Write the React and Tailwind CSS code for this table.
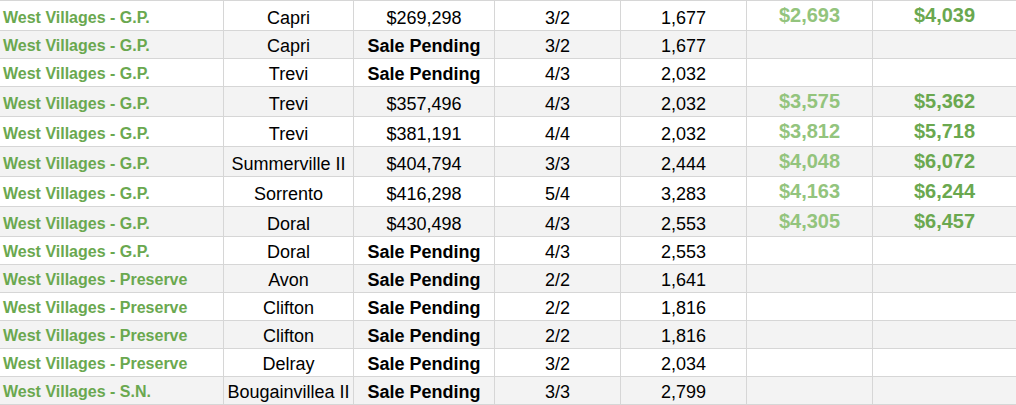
const rows = [
  ["West Villages - G.P.", "Capri", "$269,298", "3/2", "1,677", "$2,693", "$4,039"],
  ["West Villages - G.P.", "Capri", "Sale Pending", "3/2", "1,677", "", ""],
  ["West Villages - G.P.", "Trevi", "Sale Pending", "4/3", "2,032", "", ""],
  ["West Villages - G.P.", "Trevi", "$357,496", "4/3", "2,032", "$3,575", "$5,362"],
  ["West Villages - G.P.", "Trevi", "$381,191", "4/4", "2,032", "$3,812", "$5,718"],
  ["West Villages - G.P.", "Summerville II", "$404,794", "3/3", "2,444", "$4,048", "$6,072"],
  ["West Villages - G.P.", "Sorrento", "$416,298", "5/4", "3,283", "$4,163", "$6,244"],
  ["West Villages - G.P.", "Doral", "$430,498", "4/3", "2,553", "$4,305", "$6,457"],
  ["West Villages - G.P.", "Doral", "Sale Pending", "4/3", "2,553", "", ""],
  ["West Villages - Preserve", "Avon", "Sale Pending", "2/2", "1,641", "", ""],
  ["West Villages - Preserve", "Clifton", "Sale Pending", "2/2", "1,816", "", ""],
  ["West Villages - Preserve", "Clifton", "Sale Pending", "2/2", "1,816", "", ""],
  ["West Villages - Preserve", "Delray", "Sale Pending", "3/2", "2,034", "", ""],
  ["West Villages - S.N.", "Bougainvillea II", "Sale Pending", "3/3", "2,799", "", ""],
];

const cell = "flex items-end justify-center border-r border-[#d6d6d6] whitespace-nowrap overflow-hidden";

const Row = ({ data, shaded }) => {
  const [community, model, price, bedBath, sqft, low, high] = data;
  const tall = low !== "";
  const pending = price === "Sale Pending";

  return (
    <div
      className={`grid grid-cols-[224px_130px_141px_126px_126px_126px_1fr] border-b border-[#d6d6d6] ${
        tall ? "h-[30px]" : "h-[28px]"
      } ${shaded ? "bg-[#f3f3f3]" : "bg-white"}`}
    >
      {/* community */}
      <div className="flex items-end border-r border-[#d6d6d6] pl-[3px] pb-[2px] text-[16px] leading-[20px] font-bold text-[#6aa84f] whitespace-nowrap">
        {community}
      </div>
      <div className={`${cell} pb-[2px] text-[18px] leading-[20px]`}>{model}</div>
      <div className={`${cell} pb-[2px] text-[18px] leading-[20px] ${pending ? "font-bold" : ""}`}>
        {price}
      </div>
      <div className={`${cell} pb-[2px] text-[18px] leading-[20px]`}>{bedBath}</div>
      <div className={`${cell} pb-[2px] text-[18px] leading-[20px]`}>{sqft}</div>
      {/* payment columns */}
      <div className={`${cell} pb-[5px] text-[20px] leading-[20px] font-bold text-[#93c47d]`}>{low}</div>
      <div className="flex items-end justify-center pb-[5px] text-[20px] leading-[20px] font-bold text-[#6aa84f]">
        {high}
      </div>
    </div>
  );
};

export default function App() {
  return (
    <div className="w-[1016px] h-[405px] overflow-hidden bg-white font-['Liberation_Sans',Arial,sans-serif] text-black">
      <div className="border-t border-[#d6d6d6]">
        {rows.map((r, i) => (
          <Row key={i} data={r} shaded={i % 2 === 1} />
        ))}
      </div>
    </div>
  );
}
